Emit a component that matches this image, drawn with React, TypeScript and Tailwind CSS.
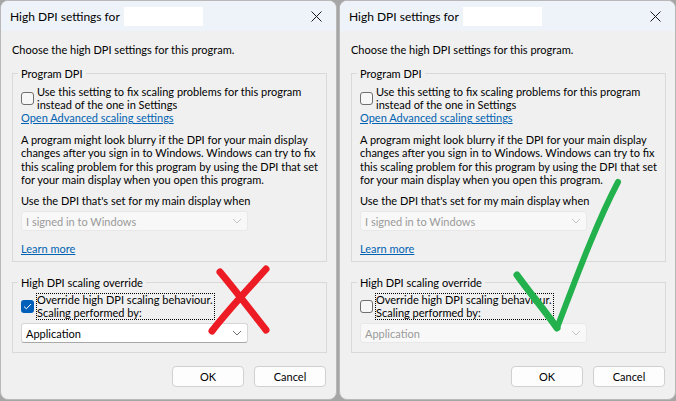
import React from 'react';

const font = "font-['Lato','Liberation_Sans',sans-serif]";

function Chevron({ disabled }: { disabled?: boolean }) {
  return (
    <svg width="10" height="6" viewBox="0 0 10 6" className="shrink-0">
      <path d="M1 1 L5 5 L9 1" fill="none" stroke={disabled ? '#c4c4c4' : '#707070'} strokeWidth="1" />
    </svg>
  );
}

function Checkbox({ checked }: { checked?: boolean }) {
  if (checked) {
    return (
      <div className="w-[13px] h-[13px] rounded-[3px] bg-[#005fb8] flex items-center justify-center shrink-0">
        <svg width="9" height="7" viewBox="0 0 9 7">
          <path d="M1 3.6 L3.4 5.8 L8 1" fill="none" stroke="#ffffff" strokeWidth="1" />
        </svg>
      </div>
    );
  }
  return <div className="w-[13px] h-[13px] rounded-[3px] border border-[#6f6f6f] bg-[#f7f7f7] shrink-0" />;
}

function Dropdown({ label, disabled }: { label: string; disabled?: boolean }) {
  return (
    <div
      className={
        disabled
          ? 'w-[227px] h-[20px] rounded-[3px] border border-[#e8e8e8] bg-[#f8f8f8] flex items-center pl-[4px] pr-[5px] text-[#9a9a9a]'
          : 'w-[227px] h-[20px] rounded-[3px] border border-[#d6d6d6] border-b-[#a8a8a8] bg-white flex items-center pl-[4px] pr-[5px] text-black'
      }
    >
      <span className="flex-1 leading-[13px]">{label}</span>
      <Chevron disabled={disabled} />
    </div>
  );
}

function Button({ children }: { children: React.ReactNode }) {
  return (
    <div className="h-[21px] rounded-[4px] border border-[#d0d0d0] bg-[#fdfdfd] flex items-center justify-center text-black w-[72px]">
      {children}
    </div>
  );
}

function Dialog({ good }: { good?: boolean }) {
  return (
    <div className={`relative w-[337px] h-[400px] bg-[#f0f0f0] border border-[#b8b8b8] rounded-[8px] overflow-hidden flex flex-col text-[11px] text-black ${font}`}>
      <div className="h-[30px] bg-[#eef3f9] flex items-center pl-[9px] pr-[10px] shrink-0 text-[12px]">
        <span className="leading-[13px]">High DPI settings for</span>
        <div className="w-[79px] h-[19px] bg-white ml-[4px]" />
        <svg width="11" height="11" viewBox="0 0 11 11" className="ml-auto mr-[4px]">
          <path d="M0.5 0.5 L10.5 10.5 M10.5 0.5 L0.5 10.5" stroke="#1a1a1a" strokeWidth="1" />
        </svg>
      </div>

      <div className="pl-[11px] pt-[12px] flex flex-col">
        <p className="leading-[13px]">Choose the high DPI settings for this program.</p>

        <fieldset className="mt-[11px] w-[315px] border border-[#d9d9d9] pl-[8px] pr-[8px] pt-[5px] pb-[6px] min-w-0">
          <legend className="-ml-[3px] px-[3px] leading-[13px]">Program DPI</legend>
          <div className="flex items-center gap-[3px]">
            <Checkbox />
            <span className="leading-[13px] whitespace-nowrap">
              Use this setting to fix scaling problems for this program
              <br />
              instead of the one in Settings
            </span>
          </div>
          <a className="block leading-[13px] text-[#0063b1] underline w-fit">Open Advanced scaling settings</a>
          <p className="mt-[9px] leading-[13.33px] whitespace-nowrap">
            A program might look blurry if the DPI for your main display
            <br />
            changes after you sign in to Windows. Windows can try to fix
            <br />
            this scaling problem for this program by using the DPI that set
            <br />
            for your main display when you open this program.
          </p>
          <p className="mt-[8px] leading-[13px]">Use the DPI that's set for my main display when</p>
          <div className="mt-[4px]">
            <Dropdown label="I signed in to Windows" disabled />
          </div>
          <a className="block mt-[11px] leading-[13px] text-[#0063b1] underline w-fit">Learn more</a>
        </fieldset>

        <fieldset className="mt-[14px] w-[315px] border border-[#d9d9d9] pl-[8px] pr-[8px] pt-[4px] pb-[9px] min-w-0">
          <legend className="-ml-[3px] px-[3px] leading-[13px]">High DPI scaling override</legend>
          <div className="flex items-center gap-[2px]">
            <Checkbox checked={!good} />
            <span className="leading-[12.5px] whitespace-nowrap border border-dotted border-black pr-[1px]">
              Override high DPI scaling behaviour.
              <br />
              Scaling performed by:
            </span>
          </div>
          <div className="mt-[3px]">
            <Dropdown label="Application" disabled={good} />
          </div>
        </fieldset>

        <div className="mt-[13px] w-[314px] flex justify-end gap-[10px]">
          <Button>OK</Button>
          <Button>Cancel</Button>
        </div>
      </div>

      {good ? (
        <svg className="absolute left-0 top-0 pointer-events-none" width="337" height="400" viewBox="0 0 337 400">
          <path d="M177 274 C190 292 205 310 217 327" fill="none" stroke="#22b14c" strokeWidth="7" strokeLinecap="round" />
          <path d="M217 327 C235 280 255 225 278 181" fill="none" stroke="#22b14c" strokeWidth="6" strokeLinecap="round" />
        </svg>
      ) : (
        <svg className="absolute left-0 top-0 pointer-events-none" width="337" height="400" viewBox="0 0 337 400">
          <path d="M219 271 C235 290 250 310 265 329" fill="none" stroke="#ed1c24" strokeWidth="7" strokeLinecap="round" />
          <path d="M265 268 C248 287 228 308 211 330" fill="none" stroke="#ed1c24" strokeWidth="7" strokeLinecap="round" />
        </svg>
      )}
    </div>
  );
}

export default function App() {
  return (
    <div className="w-[676px] h-[401px] bg-[#a6a6a6] flex gap-[2px] overflow-hidden">
      <Dialog />
      <Dialog good />
    </div>
  );
}
